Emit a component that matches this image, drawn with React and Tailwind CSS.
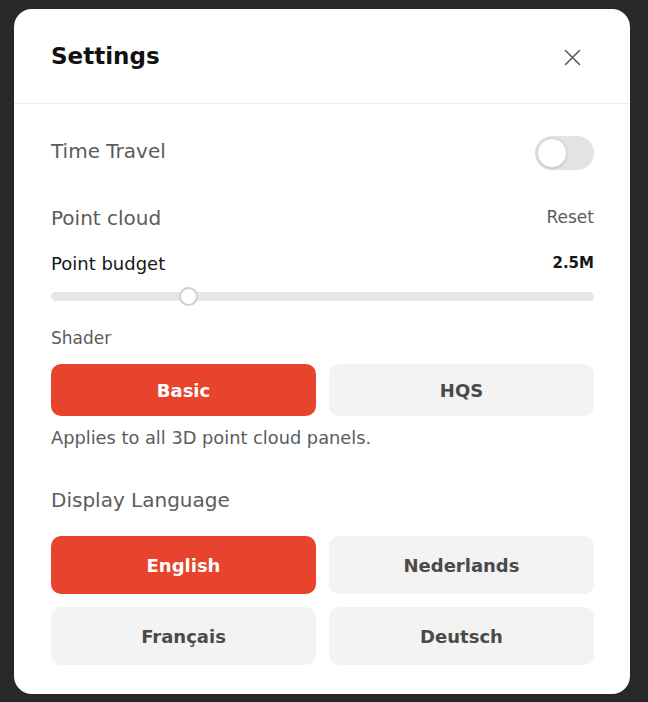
import { useState } from 'react';

const font = { fontFamily: '"DejaVu Sans", Verdana, sans-serif' };

const OptionButton = ({ label, active, onClick, tall }) => (
    <button
        onClick={onClick}
        className={`${tall ? 'h-[58px]' : 'h-[52px]'} rounded-[10px] text-[18px] font-bold transition-colors ${
            active ? 'bg-[#e8432d] text-white' : 'bg-[#f3f3f3] text-[#4a4a4a]'
        }`}
    >
        {label}
    </button>
);

const App = () => {
    const [timeTravel, setTimeTravel] = useState(false);
    const [budget, setBudget] = useState(25);
    const [shader, setShader] = useState('Basic');
    const [lang, setLang] = useState('English');

    return (
        <div className="w-[648px] h-[702px] bg-[#272929] pt-[9px] pl-[14px]" style={font}>
            <div className="w-[616px] h-[685px] bg-white rounded-[18px] flex flex-col">
                <div className="h-[95px] border-b border-[#ececec] flex items-center justify-between pl-[37px] pr-[49px]">
                    <h1 className="text-[23px] font-bold text-[#111] pt-[1px]">Settings</h1>
                    <button className="text-[#5a5a5a] pt-[2px]" aria-label="Close">
                        <svg width="17" height="17" viewBox="0 0 17 17" fill="none" stroke="currentColor" strokeWidth="1.6" strokeLinecap="round">
                            <path d="M1.5 1.5l14 14M15.5 1.5l-14 14" />
                        </svg>
                    </button>
                </div>

                <div className="flex flex-col pr-[36px] pl-[37px] pt-[32px]">
                    <div className="flex items-center justify-between h-[34px]">
                        <span className="text-[20px] text-[#5c5c5c] -mt-[4px]">Time Travel</span>
                        <button
                            onClick={() => setTimeTravel(!timeTravel)}
                            className={`w-[59px] h-[34px] rounded-full p-[2px] flex transition-colors ${timeTravel ? 'bg-[#e8432d] justify-end' : 'bg-[#e3e3e3] justify-start'}`}
                        >
                            <span className="w-[30px] h-[30px] rounded-full bg-white border border-[#d6d6d6] shadow-sm" />
                        </button>
                    </div>

                    <div className="flex items-center justify-between h-[24px] mt-[36px]">
                        <span className="text-[20px] text-[#5c5c5c]">Point cloud</span>
                        <button className="text-[17px] text-[#5c5c5c]" onClick={() => setBudget(25)}>Reset</button>
                    </div>

                    <div className="flex items-center justify-between h-[22px] mt-[22px]">
                        <span className="text-[18px] text-[#161616]">Point budget</span>
                        <span className="text-[15px] font-bold text-[#161616]">{(budget / 10).toFixed(1)}M</span>
                    </div>

                    <div className="relative h-[20px] mt-[12px] flex items-center">
                        <div className="w-full h-[9px] rounded-full bg-[#e6e6e6]" />
                        <div
                            className="absolute top-[1px] w-[19px] h-[19px] rounded-full bg-white border-[2px] border-[#cfcfcf]"
                            style={{ left: `${(budget / 100) * 543 - 8}px` }}
                        />
                        <input
                            type="range"
                            min="1"
                            max="100"
                            value={budget}
                            onChange={(e) => setBudget(Number(e.target.value))}
                            className="absolute inset-0 w-full opacity-0 cursor-pointer"
                        />
                    </div>

                    <span className="text-[17px] text-[#5c5c5c] h-[22px] leading-[22px] mt-[21px]">Shader</span>

                    <div className="grid grid-cols-2 gap-[13px] mt-[15px]">
                        {['Basic', 'HQS'].map((s) => (
                            <OptionButton key={s} label={s} active={shader === s} onClick={() => setShader(s)} />
                        ))}
                    </div>

                    <span className="text-[17.8px] text-[#5c5c5c] h-[20px] leading-[20px] mt-[12px]">Applies to all 3D point cloud panels.</span>

                    <span className="text-[20px] text-[#5c5c5c] h-[24px] leading-[24px] mt-[40px]">Display Language</span>

                    <div className="grid grid-cols-2 gap-[13px] mt-[24px]">
                        {['English', 'Nederlands', 'Français', 'Deutsch'].map((l) => (
                            <OptionButton key={l} label={l} tall active={lang === l} onClick={() => setLang(l)} />
                        ))}
                    </div>
                </div>
            </div>
        </div>
    );
};

export default App;
